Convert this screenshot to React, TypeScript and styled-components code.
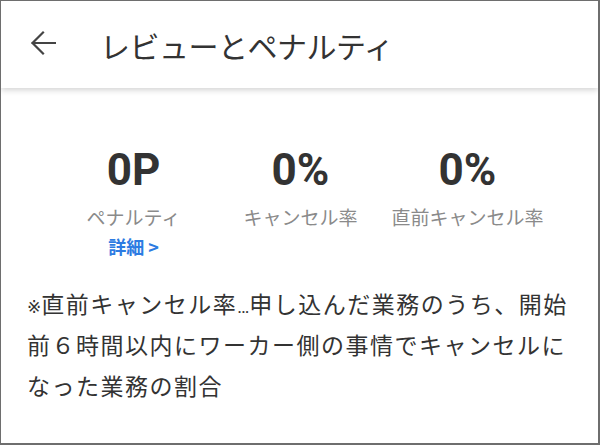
import React from "react";
import styled, { createGlobalStyle } from "styled-components";

const GlobalStyle = createGlobalStyle`
  * {
    box-sizing: border-box;
  }
  body {
    margin: 0;
    background: #ffffff;
    font-family: "Noto Sans CJK JP", "Noto Sans", sans-serif;
    color: #333333;
  }
`;

const Frame = styled.div`
  width: 600px;
  height: 445px;
  border-style: solid;
  border-color: #6e6e6e;
  border-width: 1px 2px 2px 1px;
  background: #ffffff;
  overflow: hidden;
`;

const Header = styled.header`
  display: flex;
  align-items: center;
  height: 87px;
  padding: 0 0 0 29px;
  gap: 44px;
  background: #ffffff;
  box-shadow: 0 2px 6px rgba(0, 0, 0, 0.18);
  position: relative;
`;

const BackButton = styled.button`
  display: flex;
  align-items: center;
  justify-content: center;
  padding: 0;
  margin-top: -3px;
  border: none;
  background: none;
  color: #444444;
  cursor: pointer;
`;

const Title = styled.h1`
  margin: 0;
  margin-top: 1px;
  font-size: 30px;
  font-weight: 400;
  letter-spacing: -0.5px;
  color: #333333;
`;

const Stats = styled.section`
  display: grid;
  grid-template-columns: repeat(3, 167px);
  justify-content: center;
  padding-top: 56px;
  padding-left: 2px;
`;

const Stat = styled.div`
  display: flex;
  flex-direction: column;
  align-items: center;
`;

const Value = styled.div`
  font-family: Roboto, "Noto Sans", sans-serif;
  font-weight: 700;
  font-size: 44px;
  line-height: 52px;
  color: #333333;
`;

const Label = styled.div`
  margin-top: 8px;
  font-size: 19px;
  line-height: 26px;
  color: #8a8a8a;
  white-space: nowrap;
`;

const DetailLink = styled.a`
  margin-top: 4px;
  font-size: 18px;
  font-weight: 700;
  line-height: 24px;
  color: #2d7be2;
  text-decoration: none;
  cursor: pointer;
`;

const Note = styled.p`
  margin: 25px 0 0;
  padding: 0 15px 0 26px;
  font-size: 23px;
  line-height: 41px;
  letter-spacing: 1.5px;
  color: #333333;
`;

const Mark = styled.span`
  font-family: "DejaVu Sans", sans-serif;
  font-size: 17px;
  line-height: 1;
  letter-spacing: 0;
`;

const Ellipsis = styled.span`
  font-family: Roboto, "Liberation Sans", sans-serif;
  font-size: 18px;
  line-height: 1;
  letter-spacing: 0;
`;

const ArrowIcon = () => (
  <svg width="26" height="26" viewBox="0 0 26 26" fill="none">
    <path
      d="M25 13H2.5M13 2.5L2.5 13L13 23.5"
      stroke="currentColor"
      strokeWidth="2.2"
      strokeLinecap="square"
    />
  </svg>
);

const stats = [
  { value: "0P", label: "ペナルティ", detail: true },
  { value: "0%", label: "キャンセル率" },
  { value: "0%", label: "直前キャンセル率" },
];

const App = () => {
  return (
    <>
      <GlobalStyle />
      <Frame>
        <Header>
          <BackButton aria-label="戻る">
            <ArrowIcon />
          </BackButton>
          <Title>レビューとペナルティ</Title>
        </Header>
        <Stats>
          {stats.map((s, i) => (
            <Stat key={i}>
              <Value>{s.value}</Value>
              <Label>{s.label}</Label>
              {s.detail && <DetailLink>詳細 &gt;</DetailLink>}
            </Stat>
          ))}
        </Stats>
        <Note>
          <Mark>※</Mark>
          {"直前キャンセル率"}
          <Ellipsis>…</Ellipsis>
          <span>申し込んだ業務のうち、開始</span>
          <span>前６時間以内にワーカー側の事情でキャンセルになった業務の割合</span>
        </Note>
      </Frame>
    </>
  );
};

export default App;
